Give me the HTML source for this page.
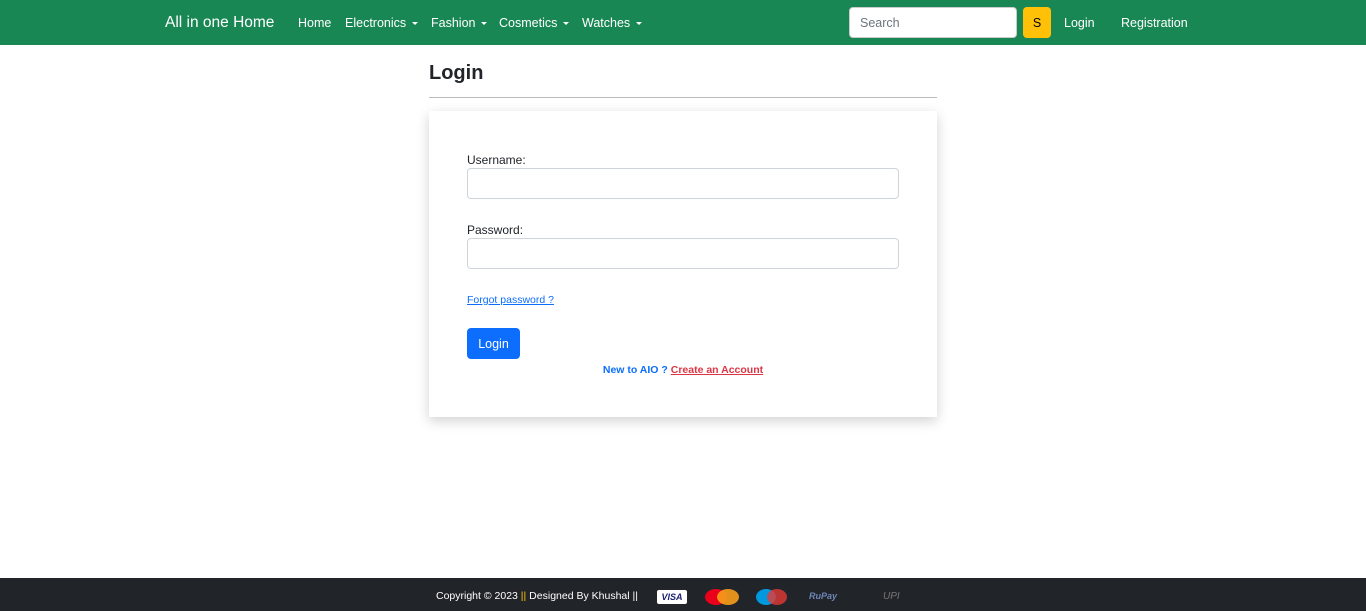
<!DOCTYPE html>
<html><head><meta charset="utf-8"><style>
*{box-sizing:border-box;margin:0;padding:0}
body{width:1366px;height:611px;position:relative;background:#fff;font-family:"Liberation Sans",sans-serif;color:#212529;overflow:hidden}
.nav{position:absolute;left:0;top:0;width:1366px;height:45px;background:#198754;color:#fff}
.nav span{position:absolute;top:16px;font-size:12.5px;white-space:nowrap}
.car{display:inline-block;border-left:3px solid transparent;border-right:3px solid transparent;border-top:3px solid #fff;vertical-align:middle;margin-left:6px}
.search{position:absolute;left:849px;top:7px;width:168px;height:31px;background:#fff;border:1px solid #ccc;border-radius:4px;font-size:12.5px;color:#6c757d;padding:8px 10px}
.sbtn{position:absolute;left:1023px;top:7px;width:28px;height:31px;background:#ffc107;border-radius:4px;font-size:12.5px;color:#000;text-align:center;line-height:32px}
h1{position:absolute;left:429px;top:62px;font-size:20px;font-weight:bold}
.hr{position:absolute;left:429px;top:97px;width:508px;height:1px;background:#bbb}
.card{position:absolute;left:429px;top:111px;width:508px;height:306px;background:#fff;box-shadow:0 4px 12px rgba(0,0,0,.18)}
.lbl{position:absolute;left:38px;font-size:12px}
.inp{position:absolute;left:38px;width:432px;height:31px;border:1px solid #ced4da;border-radius:4px}
.fp{position:absolute;left:38px;top:183px;font-size:10.5px;color:#0d6efd;text-decoration:underline}
.btn{position:absolute;left:38px;top:217px;width:53px;height:31px;background:#0d6efd;color:#fff;border-radius:4px;font-size:12.5px;text-align:center;line-height:32px}
.new{position:absolute;left:0;width:508px;top:253px;text-align:center;font-size:10.5px;font-weight:bold;color:#0d6efd}
.new a{color:#dc3545;text-decoration:underline}
.foot{position:absolute;left:0;top:578px;width:1366px;height:33px;background:#212529;color:#fff;font-size:10.5px}
.foot .t{position:absolute;left:436px;top:12px}
</style></head><body>
<div class="nav">
<span style="left:165px;top:14px;font-size:15.5px">All in one Home</span>
<span style="left:298px">Home</span>
<span style="left:345px">Electronics<i class="car"></i></span>
<span style="left:431px">Fashion<i class="car"></i></span>
<span style="left:499px">Cosmetics<i class="car"></i></span>
<span style="left:582px">Watches<i class="car"></i></span>
<div class="search">Search</div><div class="sbtn">S</div>
<span style="left:1064px">Login</span>
<span style="left:1121px">Registration</span>
</div>
<h1>Login</h1><div class="hr"></div>
<div class="card">
<div class="lbl" style="top:42px">Username:</div>
<div class="inp" style="top:57px"></div>
<div class="lbl" style="top:112px">Password:</div>
<div class="inp" style="top:127px"></div>
<div class="fp">Forgot password ?</div>
<div class="btn">Login</div>
<div class="new">New to AIO ? <a>Create an Account</a></div>
</div>
<div class="foot"><span class="t">Copyright © 2023 <span style="color:#ffc107">||</span> Designed By Khushal ||</span>
<div style="position:absolute;left:657px;top:12px;width:30px;height:14px;background:#fff;border-radius:2px;color:#1a1f71;font-size:9px;font-weight:bold;font-style:italic;text-align:center;line-height:14px">VISA</div>
<div style="position:absolute;left:705px;top:11px;width:22px;height:16px;border-radius:50%;background:#eb001b"></div>
<div style="position:absolute;left:717px;top:11px;width:22px;height:16px;border-radius:50%;background:#f79e1b;opacity:.9"></div>
<div style="position:absolute;left:756px;top:11px;width:20px;height:16px;border-radius:50%;background:#0099df"></div>
<div style="position:absolute;left:767px;top:11px;width:20px;height:16px;border-radius:50%;background:#e53935;opacity:.8"></div>
<div style="position:absolute;left:809px;top:13px;font-size:9px;font-style:italic;font-weight:bold;color:#6e86b8">RuPay</div>
<div style="position:absolute;left:883px;top:13px;font-size:10px;font-style:italic;color:#777">UPI</div>
</div>
</body></html>
